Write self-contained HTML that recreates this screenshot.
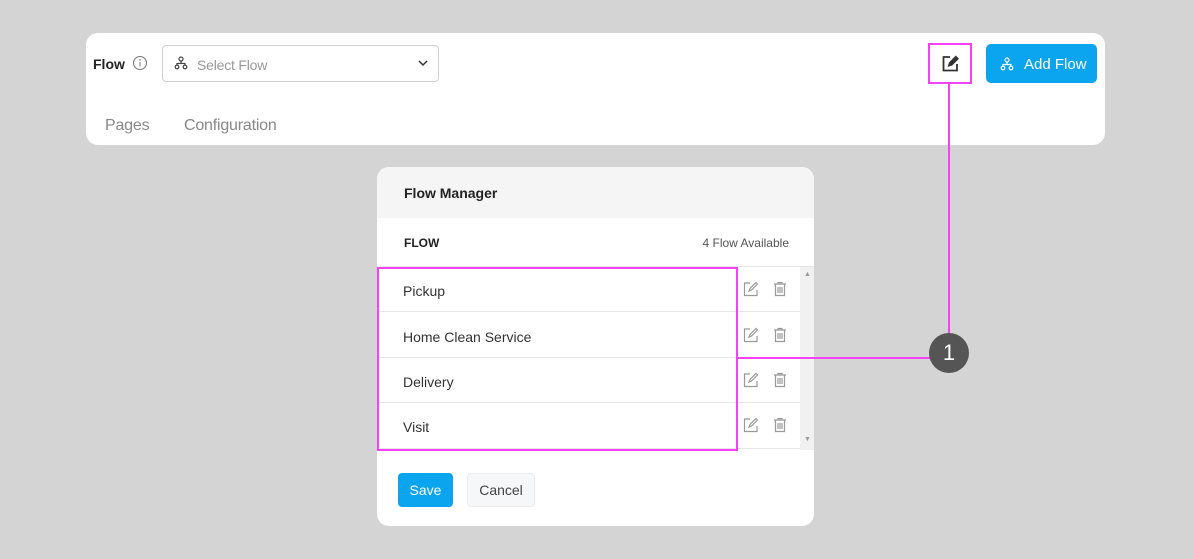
<!DOCTYPE html>
<html><head><style>
*{box-sizing:border-box;margin:0;padding:0}
body{width:1193px;height:559px;background:#d4d4d4;font-family:"Liberation Sans",sans-serif;position:relative;overflow:hidden;color:#333}
.a{position:absolute}
.card{left:86px;top:33px;width:1019px;height:112px;background:#fff;border-radius:12px}
.sel{left:162px;top:45px;width:277px;height:37px;border:1px solid #d0d0d0;border-radius:4px}
.btn{left:986px;top:44px;width:111px;height:39px;background:#0ba5ef;border-radius:5px;color:#fff;font-size:15px}
.modal{left:377px;top:167px;width:437px;height:359px;background:#fff;border-radius:12px;overflow:hidden}
.row{position:absolute;left:0;width:423px;height:45px;border-bottom:1px solid #e6e6e6;font-size:14px;color:#333}
.row span{position:absolute;left:26px;top:16px}
.ic{position:absolute;top:14px}
</style></head><body>
<div class="a card"></div>
<div class="a" style="left:93px;top:56px;font-size:14px;font-weight:bold;color:#222">Flow</div>
<svg class="a" style="left:132px;top:55px" width="16" height="16"><circle cx="8" cy="8" r="6.5" fill="none" stroke="#777" stroke-width="1"/><line x1="8" y1="7" x2="8" y2="11.5" stroke="#777"/><circle cx="8" cy="4.8" r=".8" fill="#777"/></svg>
<div class="a sel"></div>
<svg class="a" style="left:174px;top:56px" width="14" height="14" fill="none" stroke="#444" stroke-width="1.2"><circle cx="7" cy="3" r="2"/><circle cx="3" cy="11" r="1.8"/><circle cx="11" cy="11" r="1.8"/><path d="M7 5v2M3 9V7.5h8V9"/></svg>
<div class="a" style="left:197px;top:57px;font-size:14px;color:#999;letter-spacing:-.2px">Select Flow</div>
<svg class="a" style="left:418px;top:59px" width="10" height="8"><path d="M1 2l4 4 4-4" fill="none" stroke="#333" stroke-width="1.5"/></svg>
<div class="a" style="left:105px;top:117px;font-size:16px;color:#888;letter-spacing:-.2px">Pages</div>
<div class="a" style="left:184px;top:117px;font-size:16px;color:#888;letter-spacing:-.2px">Configuration</div>
<div class="a" style="left:928px;top:43px;width:44px;height:41px;border:2px solid #f542f5"></div>
<svg class="a" style="left:942px;top:55px" width="17" height="17" fill="none" stroke="#333" stroke-width="1.8"><path d="M8 2H1.5v13.5H15V9"/><path d="M7 10.5l.8-2.7 6-6 1.9 1.9-6 6z" fill="#333"/></svg>
<div class="a btn"></div>
<svg class="a" style="left:1000px;top:57px" width="14" height="14" fill="none" stroke="#fff" stroke-width="1.2"><circle cx="7" cy="3" r="2"/><circle cx="3" cy="11" r="1.8"/><circle cx="11" cy="11" r="1.8"/><path d="M7 5v2M3 9V7.5h8V9"/></svg>
<div class="a" style="left:1024px;top:56px;font-size:15px;color:#fff">Add Flow</div>

<div class="a modal">
<div class="a" style="left:0;top:0;width:437px;height:51px;background:#f5f5f5"></div>
<div class="a" style="left:27px;top:18px;font-size:14px;font-weight:bold;color:#222">Flow Manager</div>
<div class="a" style="left:27px;top:69px;font-size:12px;font-weight:bold;color:#222">FLOW</div>
<div class="a" style="right:25px;top:69px;font-size:12px;color:#555">4 Flow Available</div>
<div class="a" style="left:0;top:99px;width:437px;height:1px;background:#e6e6e6"></div>
<div class="a" style="left:423px;top:100px;width:14px;height:183px;background:#f1f1f1"></div>
<div class="a" style="left:427px;top:104px;font-size:7px;color:#999">▲</div>
<div class="a" style="left:427px;top:269px;font-size:7px;color:#999">▼</div>
<div class="row" style="top:100px"><span>Pickup</span></div>
<div class="row" style="top:146px"><span>Home Clean Service</span></div>
<div class="row" style="top:191px"><span>Delivery</span></div>
<div class="row" style="top:236px;height:46px"><span>Visit</span></div>
<div class="a" style="left:21px;top:306px;width:55px;height:34px;background:#0ba5ef;border-radius:4px;color:#fff;font-size:14px;text-align:center;line-height:35px">Save</div>
<div class="a" style="left:90px;top:306px;width:68px;height:34px;background:#f6f7f8;border:1px solid #ececec;border-radius:4px;color:#444;font-size:14px;text-align:center;line-height:33px">Cancel</div>
</div>
<div class="a" style="left:743px;top:281px">
<svg class="ic" style="top:0" width="16" height="16" fill="none" stroke="#999" stroke-width="1.2"><path d="M7 2H1.5v12.5H14V9"/><path d="M6 10l1-2.5 6-6 1.5 1.5-6 6z"/></svg>
<svg class="ic" style="top:0;left:30px" width="14" height="16" fill="none" stroke="#999" stroke-width="1.2"><path d="M1 3h12M5 3V1.5h4V3M2.5 3.5v11h9v-11M5 6v6M7 6v6M9 6v6"/></svg>
</div>
<div class="a" style="left:743px;top:327px">
<svg class="ic" style="top:0" width="16" height="16" fill="none" stroke="#999" stroke-width="1.2"><path d="M7 2H1.5v12.5H14V9"/><path d="M6 10l1-2.5 6-6 1.5 1.5-6 6z"/></svg>
<svg class="ic" style="top:0;left:30px" width="14" height="16" fill="none" stroke="#999" stroke-width="1.2"><path d="M1 3h12M5 3V1.5h4V3M2.5 3.5v11h9v-11M5 6v6M7 6v6M9 6v6"/></svg>
</div>
<div class="a" style="left:743px;top:372px">
<svg class="ic" style="top:0" width="16" height="16" fill="none" stroke="#999" stroke-width="1.2"><path d="M7 2H1.5v12.5H14V9"/><path d="M6 10l1-2.5 6-6 1.5 1.5-6 6z"/></svg>
<svg class="ic" style="top:0;left:30px" width="14" height="16" fill="none" stroke="#999" stroke-width="1.2"><path d="M1 3h12M5 3V1.5h4V3M2.5 3.5v11h9v-11M5 6v6M7 6v6M9 6v6"/></svg>
</div>
<div class="a" style="left:743px;top:417px">
<svg class="ic" style="top:0" width="16" height="16" fill="none" stroke="#999" stroke-width="1.2"><path d="M7 2H1.5v12.5H14V9"/><path d="M6 10l1-2.5 6-6 1.5 1.5-6 6z"/></svg>
<svg class="ic" style="top:0;left:30px" width="14" height="16" fill="none" stroke="#999" stroke-width="1.2"><path d="M1 3h12M5 3V1.5h4V3M2.5 3.5v11h9v-11M5 6v6M7 6v6M9 6v6"/></svg>
</div>
<div class="a" style="left:377px;top:267px;width:361px;height:184px;border:2px solid #f542f5"></div>
<div class="a" style="left:948px;top:84px;width:2px;height:252px;background:#f542f5"></div>
<div class="a" style="left:737px;top:357px;width:195px;height:2px;background:#f542f5"></div>
<div class="a" style="left:929px;top:333px;width:40px;height:40px;border-radius:50%;background:#555;color:#fff;font-size:22px;text-align:center;line-height:40px">1</div>
</body></html>
